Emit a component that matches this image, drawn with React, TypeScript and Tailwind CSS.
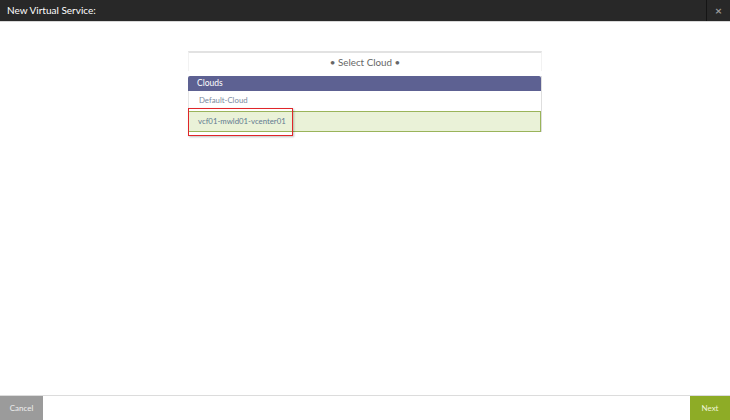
export default function App() {
  return (
    <div
      className="flex h-[420px] w-[730px] flex-col bg-white text-[10px]"
      style={{ fontFamily: 'Lato, "Open Sans", sans-serif' }}
    >
      <header className="flex h-[22px] shrink-0 items-stretch border-b border-[#d8d8d8] bg-[#282828]">
        <h1 className="flex flex-1 items-center pl-[7px] text-[10px] font-normal text-white">
          New Virtual Service:
        </h1>
        <button className="flex w-[24px] items-center justify-center border-l border-[#151515] text-[12px] leading-none font-bold text-[#9a9a9a]">
          ×
        </button>
      </header>

      <main className="flex flex-1 flex-col items-center pt-[29px]">
        <div className="w-[354px]">
          <div className="flex h-[20px] items-center justify-center border-x border-t-2 border-x-[#f2f2f2] border-t-[#e2e2e2] text-[9.8px] text-[#666]">
            • Select Cloud •
          </div>

          <div className="mt-[5px] border-r border-[#dedede]">
            <div className="flex h-[15px] items-center rounded-t-[2px] bg-[#5d6192] pl-[9px] text-[8.5px] text-white">
              Clouds
            </div>
            <div className="flex h-[20px] items-center border-l border-[#e6e6e6] pl-[10px] text-[7.8px] text-[#7a8aa0]">
              Default-Cloud
            </div>
            <div className="relative flex h-[21px] items-center border border-[#9ab45a] bg-[#eaf2d8] pl-[9px] text-[7.8px] text-[#5f7a90]">
              vcf01-mwld01-vcenter01
              <span className="absolute top-[-4px] left-[-1px] h-[28px] w-[105px] border-[1.5px] border-[#e0262a] shadow-[1px_1px_2px_rgba(0,0,0,0.25)]" />
            </div>
          </div>
        </div>
      </main>

      <footer className="flex h-[25px] shrink-0 justify-between border-t border-[#dcdcdc]">
        <button className="w-[43px] bg-[#9b9b9b] text-[8px] text-[#eeeeee]">Cancel</button>
        <button className="w-[40px] bg-[#8eac26] text-[8px] text-[#eef5d8]">Next</button>
      </footer>
    </div>
  )
}
